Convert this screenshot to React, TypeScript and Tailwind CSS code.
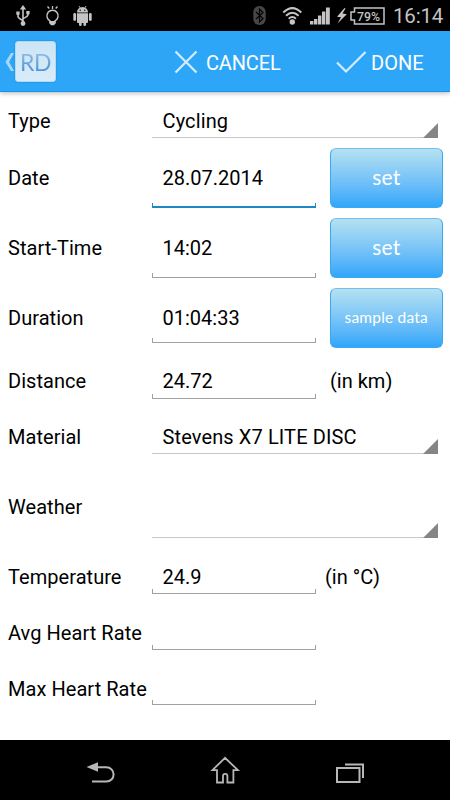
import { ReactNode } from "react";
import clsx from "clsx";

type Row = {
  label: string;
  value?: string;
  kind: "input" | "spinner";
  height: string;
  box: string;
  focused?: boolean;
  action?: string;
  unit?: string;
};

const ROWS: Row[] = [
  { label: "Type", value: "Cycling", kind: "spinner", height: "h-11", box: "h-[34px]" },
  { label: "Date", value: "28.07.2014", kind: "input", height: "h-[70px]", box: "h-[60px]", focused: true, action: "set" },
  { label: "Start-Time", value: "14:02", kind: "input", height: "h-[70px]", box: "h-[60px]", action: "set" },
  { label: "Duration", value: "01:04:33", kind: "input", height: "h-[70px]", box: "h-[50px]", action: "sample data" },
  { label: "Distance", value: "24.72", kind: "input", height: "h-14", box: "h-9", unit: "(in km)" },
  { label: "Material", value: "Stevens X7 LITE DISC", kind: "spinner", height: "h-14", box: "h-[34px]" },
  { label: "Weather", kind: "spinner", height: "h-[84px]", box: "h-[62px]" },
  { label: "Temperature", value: "24.9", kind: "input", height: "h-14", box: "h-[34px]", unit: "(in °C)" },
  { label: "Avg Heart Rate", kind: "input", height: "h-14", box: "h-[34px]" },
  { label: "Max Heart Rate", kind: "input", height: "h-14", box: "h-8" },
];

export default function App() {
  return (
    <div className="flex h-[800px] w-[450px] flex-col overflow-hidden bg-white font-['Roboto',sans-serif] text-black">
      <StatusBar />
      <ActionBar />
      <main className="flex flex-1 flex-col bg-white pt-[7px]">
        {ROWS.map((row) => (
          <FormRow key={row.label} row={row} />
        ))}
      </main>
      <NavBar />
    </div>
  );
}

function StatusBar() {
  return (
    <header className="flex h-[31px] shrink-0 bg-black">
      <svg width="390" height="31" viewBox="0 0 390 31" fill="none" stroke="#c4c4c4">
        {/* usb */}
        <path d="M23 8v15M18 13v3.5q0 1.5 5 4M28 12v2.5q0 2-5 4" strokeWidth="1.6" />
        <path d="M19.8 9.5 23 5l3.2 4.500zM16.300 11.500h3.300v3.300h-3.300zM26.300 11h3.300v3.300h-3.300z" fill="#c4c4c4" stroke="none" />
        <circle cx="23" cy="23.5" r="2.4" fill="#c4c4c4" stroke="none" />
        {/* light bulb */}
        <path d="M50 20.800a5.600 5.600 0 1 1 5 0v1.500h-5z" strokeWidth="1.4" />
        <path d="M49.500 21h6v2.500l-1.500 1.800h-3l-1.500-1.800z" fill="#c4c4c4" stroke="none" />
        <path d="M52.500 6v3M47.500 6.500l1.800 2M57.500 6.500l-1.800 2" strokeWidth="1.3" />
        {/* android */}
        <g fill="#c4c4c4" stroke="none">
          <path d="M77 12.500a5.500 5.500 0 0 1 11 0z" />
          <path d="M77 13.300h11v8.700a1 1 0 0 1-1 1H78a1 1 0 0 1-1-1z" />
          <rect x="73.300" y="13" width="2.800" height="8" rx="1.400" />
          <rect x="88.900" y="13" width="2.800" height="8" rx="1.400" />
          <rect x="79" y="21" width="2.700" height="5" rx="1.300" />
          <rect x="83.400" y="21" width="2.700" height="5" rx="1.300" />
          <path d="m79 6 1.500 2.500M86 6l-1.500 2.500" stroke="#c4c4c4" strokeWidth=".9" />
        </g>
        <circle cx="80.200" cy="10.200" r=".7" fill="#000" stroke="none" />
        <circle cx="84.800" cy="10.200" r=".7" fill="#000" stroke="none" />
        {/* bluetooth, switched on but idle */}
        <rect x="253.300" y="6" width="12.400" height="19" rx="6" fill="#474747" stroke="none" />
        <path d="m256 12 7 6.500-3.500 3.500V9l3.500 3.500-7 6.500" stroke="#050505" strokeWidth="1.3" />
        {/* wifi */}
        <path d="M283.300 12.500q9-8.800 18 0M286 15.800q6.300-6 12.600 0M288.700 18.700q3.600-3.300 7.200 0" strokeWidth="2" />
        <circle cx="292.300" cy="22" r="2.700" fill="#c4c4c4" stroke="none" />
        {/* signal */}
        <path d="M310 21h3.400v3.500H310zM314 19h3.400v5.500H314zM318 15.500h3.400v9H318zM322 11.500h3.400v13H322zM326 7.500h3.800v17H326z" fill="#c4c4c4" stroke="none" />
        {/* battery */}
        <path d="m344.500 8-7.500 8.800 4 .5-3.500 6.200 9.300-9.300-4.300-.6 3-5.100z" fill="#c4c4c4" stroke="none" />
        <path d="M354.500 8H384v16h-29.500v-4h-3.500v-8h3.500z" strokeWidth="1.5" />
        <text x="357" y="20.500" fill="#c4c4c4" stroke="none" fontFamily="Roboto" fontWeight="500" fontSize="13" textLength="23" lengthAdjust="spacingAndGlyphs">79%</text>
      </svg>
      <span className="ml-[3px] mt-[2px] text-[20.5px] leading-[28px] tracking-[-0.2px] text-[#c4c4c4]">16:14</span>
    </header>
  );
}

function ActionBar() {
  return (
    <div className="z-10 flex h-[61px] shrink-0 items-center border-b border-[#1096ee] bg-[#2ea6f8] pt-px text-white shadow-[0_1px_5px_rgba(0,0,0,0.3)]">
      <svg className="ml-[5px] shrink-0" width="10" height="20" viewBox="0 0 10 20">
        <path d="M6 1h3L4 10l5 9H6L.5 10z" fill="#a5d9fb" />
      </svg>
      <div className="flex size-[41px] shrink-0 items-center justify-center rounded-[3px] border border-[#b5d9f1] bg-gradient-to-b from-[#cde5f5] to-[#d8ebf9] shadow-[0_0_2px_#1683cf]">
        <span className="bg-gradient-to-b from-[#9fc7e9] to-[#3789d6] bg-clip-text font-['Lato',sans-serif] text-[23px] leading-[28px] tracking-[-0.5px] text-transparent">RD</span>
      </div>
      <button className="ml-[118px] flex items-center text-[20px]">
        <svg width="24" height="24" viewBox="0 0 24 24" fill="none" stroke="#d4edfe" strokeWidth="2.2">
          <path d="m1.500 1.500 21 21M22.500 1.500l-21 21" />
        </svg>
        <span className="ml-[7.5px] w-[75.5px] whitespace-nowrap pt-[3px] tracking-[-0.15px]">CANCEL</span>
      </button>
      <button className="ml-[55px] flex items-center text-[20px]">
        <svg width="31" height="24" viewBox="0 0 31 24" fill="none" stroke="#d4edfe" strokeWidth="2.2">
          <path d="M1 12.500 10 21.500 29.500 2" />
        </svg>
        <span className="ml-1 whitespace-nowrap pt-[3px]">DONE</span>
      </button>
    </div>
  );
}

function FormRow({ row }: { row: Row }) {
  return (
    <div className={clsx("flex shrink-0 items-center pl-2 text-[20px] leading-[24px]", row.height)}>
      <span className="w-36 shrink-0 whitespace-nowrap tracking-[0.05px]">{row.label}</span>
      {row.kind === "spinner" ? (
        <Spinner box={row.box}>{row.value}</Spinner>
      ) : (
        <Field box={row.box} focused={row.focused}>{row.value}</Field>
      )}
      {row.action && (
        <button
          className={clsx(
            "ml-[14.5px] h-[60px] w-[112.5px] whitespace-nowrap rounded-md border border-[#39a9f1] border-t-[#72bff0] bg-gradient-to-b from-[#b5e1f1] to-[#2ea6fa] pb-0.5 font-['Lato',sans-serif] text-white",
            row.action === "set" ? "text-[21px] tracking-[0.2px]" : "text-[15.5px] tracking-[0.2px]"
          )}
        >
          {row.action}
        </button>
      )}
      {row.unit && <span className={row.label === "Distance" ? "ml-[14.5px]" : "ml-[9.5px]"}>{row.unit}</span>}
    </div>
  );
}

function Field({ box, focused, children }: { box: string; focused?: boolean; children?: ReactNode }) {
  return (
    <div className={clsx("flex w-[163.5px] flex-col", box)}>
      <span className="flex flex-1 items-center pl-[10.5px]">{children}</span>
      <span
        className={clsx(
          "-mt-[5px] h-[5px] shrink-0 border-x",
          focused ? "border-b-2 border-[#1e88c0]" : "border-b border-[#a0a0a0]"
        )}
      />
    </div>
  );
}

function Spinner({ box, children }: { box: string; children?: ReactNode }) {
  return (
    <div className={clsx("relative flex w-[286px] items-center border-b border-[#c8c8c8] pl-[10.5px] tracking-[0.12px]", box)}>
      {children}
      <svg className="absolute -bottom-px right-0" width="15" height="15" viewBox="0 0 15 15">
        <path d="M15 0v15H0z" fill="#858585" />
      </svg>
    </div>
  );
}

function NavBar() {
  return (
    <nav className="flex h-[60px] shrink-0 items-center bg-black">
      <svg width="450" height="60" viewBox="0 0 450 60" fill="none" stroke="#b7b7b7" strokeWidth="2">
        <path d="M97 27.300h9.500a7 7 0 0 1 0 14.200H92" />
        <path d="M86.500 27 98 22.200v9.600z" fill="#b7b7b7" stroke="none" />
        <path d="M225 17.800 212.500 30.200h4.500v12.300h6V36a2.200 2.200 0 0 1 4.400 0v6.500h6V30.200h4.500z" strokeWidth="1.8" />
        <path d="M337 28h22.500v14H337z" />
        <path d="M345 24.500h18v13.500" />
      </svg>
    </nav>
  );
}
